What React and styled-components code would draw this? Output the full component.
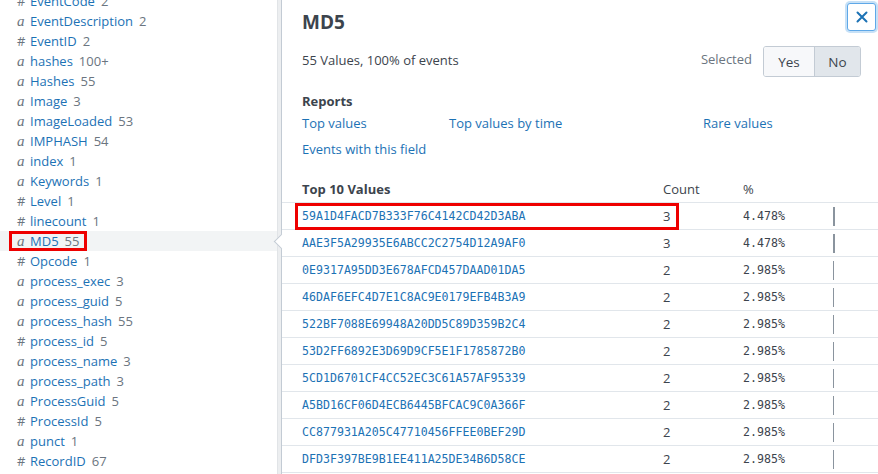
import React from "react";
import styled, { createGlobalStyle } from "styled-components";

const Global = createGlobalStyle`
  html, body { margin: 0; padding: 0; background: #fff; }
  body { font-family: "Open Sans", "Liberation Sans", sans-serif; overflow: hidden; }
  *, *::before, *::after { box-sizing: border-box; }
`;

const Page = styled.div`
  display: flex;
  width: 878px;
  height: 474px;
  overflow: hidden;
  background: #fff;
`;

const Sidebar = styled.div`
  width: 277px;
  flex: none;
  overflow: hidden;
`;

const FieldList = styled.ul`
  list-style: none;
  margin: -9px 0 0 0;
  padding: 0;
`;

const FieldRow = styled.li`
  height: 20px;
  display: flex;
  align-items: center;
  padding-left: 17px;
  font-size: 13px;
  line-height: 20px;
  background: ${(p) => (p.$active ? "#f2f4f5" : "transparent")};
`;

const FieldInner = styled.span`
  position: relative;
  display: flex;
  align-items: center;
  height: 20px;
  &::after {
    content: "";
    display: ${(p) => (p.$marked ? "block" : "none")};
    position: absolute;
    left: -8px;
    top: 0;
    right: -8px;
    bottom: 0;
    border: 3px solid #ee0000;
  }
`;

const TypeIcon = styled.span`
  width: 13px;
  color: #6b7580;
  font-family: ${(p) => (p.$kind === "a" ? '"Liberation Serif", "DejaVu Serif", serif' : '"Open Sans", sans-serif')};
  font-style: ${(p) => (p.$kind === "a" ? "italic" : "normal")};
  font-size: ${(p) => (p.$kind === "a" ? "15px" : "13px")};
`;

const FieldName = styled.span`
  color: #1c72b5;
`;

const FieldCount = styled.span`
  color: #6b7580;
  margin-left: 6px;
`;

const ScrollTrack = styled.div`
  width: 4px;
  flex: none;
  background: #eceef0;
  border-left: 1px solid #e1e4e7;
`;

const Popover = styled.div`
  position: relative;
  flex: 1;
  border-left: 1px solid #c3cbd4;
  background: #fff;
  color: #3c444d;
  font-size: 13px;
  &::before {
    content: "";
    position: absolute;
    left: -6px;
    top: 236px;
    width: 11px;
    height: 11px;
    background: #fff;
    border-left: 1px solid #c3cbd4;
    border-bottom: 1px solid #c3cbd4;
    transform: rotate(45deg);
  }
`;

const Inner = styled.div`
  padding: 3px 2px 0 20px;
`;

const TitleRow = styled.div`
  display: flex;
  justify-content: space-between;
  align-items: flex-start;
`;

const Title = styled.h2`
  margin: 9px 0 0 0;
  font-size: 19px;
  line-height: 20px;
  font-weight: 700;
  color: #3c444d;
`;

const CloseButton = styled.button`
  width: 29px;
  height: 28px;
  border: 1px solid #5ea8e8;
  border-radius: 3px;
  background: #fff;
  box-shadow: 0 0 0 2px rgba(94, 168, 232, 0.35);
  display: flex;
  align-items: center;
  justify-content: center;
  padding: 0;
`;

const MetaRow = styled.div`
  display: flex;
  align-items: center;
  margin-top: 14px;
  padding-right: 15px;
`;

const MetaText = styled.div`
  flex: 1;
  line-height: 20px;
  margin-bottom: 3px;
`;

const SelectedLabel = styled.span`
  color: #6b7580;
  margin-right: 11px;
  margin-bottom: 6px;
`;

const Toggle = styled.div`
  display: flex;
  border: 1px solid #c3cbd4;
  border-radius: 3px;
  overflow: hidden;
  height: 31px;
`;

const ToggleOption = styled.div`
  width: ${(p) => p.$w}px;
  display: flex;
  align-items: center;
  justify-content: center;
  font-size: 13.5px;
  color: #3c444d;
  background: ${(p) => (p.$on ? "#e1e6eb" : "#f7f8fa")};
  & + & { border-left: 1px solid #c3cbd4; }
`;

const SectionHeading = styled.div`
  margin-top: 16px;
  font-weight: 700;
  line-height: 16px;
`;

const Links = styled.div`
  display: grid;
  grid-template-columns: 147px 254px auto;
  grid-auto-rows: 20px;
  row-gap: 6px;
  margin-top: 4px;
`;

const Link = styled.a`
  color: #1c72b5;
  text-decoration: none;
  line-height: 20px;
`;

const Table = styled.div`
  margin-top: 16px;
`;

const TRow = styled.div`
  display: grid;
  grid-template-columns: 361px 80px 90px 1fr;
  align-items: center;
  height: ${(p) => (p.$head ? 28 : 27)}px;
  padding-left: 20px;
  border-bottom: 1px solid #e1e6eb;
  position: relative;
  &::after {
    content: "";
    display: ${(p) => (p.$marked ? "block" : "none")};
    position: absolute;
    left: 13px;
    top: 0;
    width: 384px;
    height: 27px;
    border: 3px solid #ee0000;
  }
`;

const HeadCell = styled.div`
  font-weight: ${(p) => (p.$bold ? 700 : 400)};
  color: #3c444d;
`;

const ValueCell = styled.div`
  font-family: "DejaVu Sans Mono", "Liberation Mono", monospace;
  font-size: 11.6px;
  color: #1c72b5;
`;

const CountCell = styled.div`
  color: #3c444d;
`;

const PctCell = styled.div`
  font-family: "DejaVu Sans Mono", "Liberation Mono", monospace;
  font-size: 11.6px;
  color: #3c444d;
`;

const Bar = styled.div`
  height: 19px;
  background: #8a949e;
`;

const fields = [
  ["#", "EventCode", "2"],
  ["a", "EventDescription", "2"],
  ["#", "EventID", "2"],
  ["a", "hashes", "100+"],
  ["a", "Hashes", "55"],
  ["a", "Image", "3"],
  ["a", "ImageLoaded", "53"],
  ["a", "IMPHASH", "54"],
  ["a", "index", "1"],
  ["a", "Keywords", "1"],
  ["#", "Level", "1"],
  ["#", "linecount", "1"],
  ["a", "MD5", "55"],
  ["#", "Opcode", "1"],
  ["a", "process_exec", "3"],
  ["a", "process_guid", "5"],
  ["a", "process_hash", "55"],
  ["#", "process_id", "5"],
  ["a", "process_name", "3"],
  ["a", "process_path", "3"],
  ["a", "ProcessGuid", "5"],
  ["#", "ProcessId", "5"],
  ["a", "punct", "1"],
  ["#", "RecordID", "67"],
];

const values = [
  ["59A1D4FACD7B333F76C4142CD42D3ABA", 3, 4.478],
  ["AAE3F5A29935E6ABCC2C2754D12A9AF0", 3, 4.478],
  ["0E9317A95DD3E678AFCD457DAAD01DA5", 2, 2.985],
  ["46DAF6EFC4D7E1C8AC9E0179EFB4B3A9", 2, 2.985],
  ["522BF7088E69948A20DD5C89D359B2C4", 2, 2.985],
  ["53D2FF6892E3D69D9CF5E1F1785872B0", 2, 2.985],
  ["5CD1D6701CF4CC52EC3C61A57AF95339", 2, 2.985],
  ["A5BD16CF06D4ECB6445BFCAC9C0A366F", 2, 2.985],
  ["CC877931A205C47710456FFEE0BEF29D", 2, 2.985],
  ["DFD3F397BE9B1EE411A25DE34B6D58CE", 2, 2.985],
];

export default function App() {
  return (
    <Page>
      <Global />
      <Sidebar>
        <FieldList>
          {fields.map(([k, name, count]) => (
            <FieldRow key={name} $active={name === "MD5"}>
              <FieldInner $marked={name === "MD5"}>
                <TypeIcon $kind={k}>{k}</TypeIcon>
                <FieldName>{name}</FieldName>
                <FieldCount>{count}</FieldCount>
              </FieldInner>
            </FieldRow>
          ))}
        </FieldList>
      </Sidebar>
      <ScrollTrack />
      <Popover>
        <Inner>
          <TitleRow>
            <Title>MD5</Title>
            <CloseButton aria-label="Close">
              <svg width="12" height="12" viewBox="0 0 12 12">
                <path d="M1.5 1.5 L10.5 10.5 M10.5 1.5 L1.5 10.5" stroke="#1c72b5" strokeWidth="2" strokeLinecap="round" />
              </svg>
            </CloseButton>
          </TitleRow>
          <MetaRow>
            <MetaText>55 Values, 100% of events</MetaText>
            <SelectedLabel>Selected</SelectedLabel>
            <Toggle>
              <ToggleOption $w={50}>Yes</ToggleOption>
              <ToggleOption $w={46} $on>No</ToggleOption>
            </Toggle>
          </MetaRow>
          <SectionHeading>Reports</SectionHeading>
          <Links>
            <Link>Top values</Link>
            <Link>Top values by time</Link>
            <Link>Rare values</Link>
            <Link>Events with this field</Link>
          </Links>
        </Inner>
        <Table>
          <TRow $head>
            <HeadCell $bold>Top 10 Values</HeadCell>
            <HeadCell>Count</HeadCell>
            <HeadCell>%</HeadCell>
            <div />
          </TRow>
          {values.map(([v, c, p], i) => (
            <TRow key={v} $marked={i === 0}>
              <ValueCell>{v}</ValueCell>
              <CountCell>{c}</CountCell>
              <PctCell>{p.toFixed(3)}%</PctCell>
              <div>
                <Bar style={{ width: `${Math.max(1, Math.round(p * 0.45))}px` }} />
              </div>
            </TRow>
          ))}
        </Table>
      </Popover>
    </Page>
  );
}
